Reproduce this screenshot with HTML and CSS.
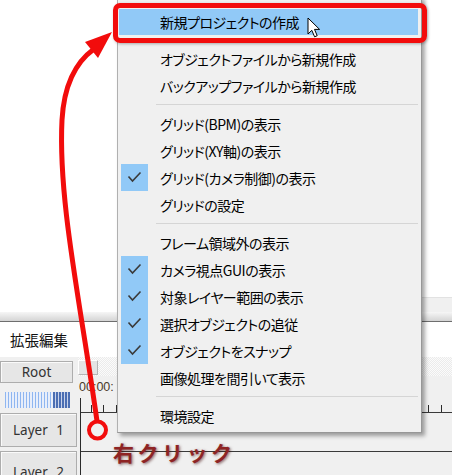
FILE: index.html
```html
<!DOCTYPE html>
<html lang="ja">
<head>
<meta charset="utf-8">
<link rel="stylesheet" href="styles.css">
</head>
<body>
<div class="screen">
  <div class="top">
    <div class="main-pane"></div>
    <div class="side-pane"><div class="side-foot"></div></div>
  </div>
  <div class="band"></div>
  <div class="title">拡張編集</div>
  <div class="timeline">
    <div class="left-col">
      <div class="btn root">Root</div>
      <div class="meter"></div>
      <div class="btn layer">Layer 1</div>
      <div class="btn layer second">Layer 2</div>
    </div>
    <div class="right-col">
      <div class="toprow"><span class="mini-btn"></span></div>
      <div class="time">00:00:</div>
      <div class="tracks">
        <div class="ruler"></div>
        <div class="track"></div>
        <div class="track"></div>
      </div>
    </div>
  </div>

  <div class="menu">
    <div class="item hl first"><span class="check"></span><span class="label">新規プロジェクトの作成</span></div>
    <div class="item"><span class="check"></span><span class="label">オブジェクトファイルから新規作成</span></div>
    <div class="item"><span class="check"></span><span class="label">バックアップファイルから新規作成</span></div>
    <div class="sep"></div>
    <div class="item"><span class="check"></span><span class="label">グリッド(BPM)の表示</span></div>
    <div class="item"><span class="check"></span><span class="label">グリッド(XY軸)の表示</span></div>
    <div class="item"><span class="check on"><svg viewBox="0 0 27 27" width="27" height="27"><polyline points="7.5,12.5 11.5,17 19.5,8.5" fill="none" stroke="#3a3a3a" stroke-width="1.6"/></svg></span><span class="label">グリッド(カメラ制御)の表示</span></div>
    <div class="item"><span class="check"></span><span class="label">グリッドの設定</span></div>
    <div class="sep"></div>
    <div class="item"><span class="check"></span><span class="label">フレーム領域外の表示</span></div>
    <div class="item"><span class="check on"><svg viewBox="0 0 27 27" width="27" height="27"><polyline points="7.5,12.5 11.5,17 19.5,8.5" fill="none" stroke="#3a3a3a" stroke-width="1.6"/></svg></span><span class="label">カメラ視点GUIの表示</span></div>
    <div class="item"><span class="check on"><svg viewBox="0 0 27 27" width="27" height="27"><polyline points="7.5,12.5 11.5,17 19.5,8.5" fill="none" stroke="#3a3a3a" stroke-width="1.6"/></svg></span><span class="label">対象レイヤー範囲の表示</span></div>
    <div class="item"><span class="check on"><svg viewBox="0 0 27 27" width="27" height="27"><polyline points="7.5,12.5 11.5,17 19.5,8.5" fill="none" stroke="#3a3a3a" stroke-width="1.6"/></svg></span><span class="label">選択オブジェクトの追従</span></div>
    <div class="item"><span class="check on"><svg viewBox="0 0 27 27" width="27" height="27"><polyline points="7.5,12.5 11.5,17 19.5,8.5" fill="none" stroke="#3a3a3a" stroke-width="1.6"/></svg></span><span class="label">オブジェクトをスナップ</span></div>
    <div class="item"><span class="check"></span><span class="label">画像処理を間引いて表示</span></div>
    <div class="sep"></div>
    <div class="item"><span class="check"></span><span class="label">環境設定</span></div>
  </div>

  <div class="red-rect"></div>
  <svg class="overlay" width="452" height="475" viewBox="0 0 452 475">
    <path d="M97,421 C80,300 58,200 62,120 C64,85 76,62 94,49" fill="none" stroke="#f20c0c" stroke-width="5"/>
    <polygon points="112,32 85,42 98,58" fill="#f20c0c"/>
    <circle cx="97.5" cy="430" r="8.5" fill="none" stroke="#f20c0c" stroke-width="4"/>
  </svg>
  <svg class="cursor" width="16" height="22" viewBox="0 0 16 22">
    <path d="M1,1 L1,17 L4.8,13.3 L7.6,19.8 L10.2,18.7 L7.5,12.4 L12.6,12.4 Z" fill="#fff" stroke="#000" stroke-width="1" stroke-linejoin="round"/>
  </svg>
  <div class="callout">右クリック</div>
</div>
</body>
</html>
```

FILE: styles.css
```css
html, body {
  margin: 0;
  padding: 0;
}
body {
  width: 452px;
  height: 475px;
  overflow: hidden;
  background: #fff;
  font-family: "Noto Sans CJK JP", "Noto Sans", sans-serif;
}
.screen {
  position: relative;
  width: 452px;
  height: 475px;
  display: flex;
  flex-direction: column;
}
.top {
  height: 312px;
  display: flex;
}
.main-pane {
  flex: 1;
  background: #fff;
}
.side-pane {
  width: 160px;
  display: flex;
  flex-direction: column;
  justify-content: flex-end;
  background: #fff;
}
.side-foot {
  height: 14px;
  border-top: 1px solid #e2e2e2;
  background: #f0f0f0;
}
.band {
  height: 9px;
  background: linear-gradient(#f6f6f6, #d4d4d4);
  border-bottom: 1px solid #6e6e6e;
}
.title {
  height: 35px;
  line-height: 35px;
  padding-left: 10px;
  font-size: 14.5px;
  color: #111;
  background: #fff;
}
.timeline {
  flex: 1;
  display: grid;
  grid-template-columns: 78px 1fr;
  background: #f0f0f0;
  min-height: 0;
}
.left-col {
  display: flex;
  flex-direction: column;
  min-height: 0;
}
.btn {
  box-sizing: border-box;
  flex: none;
  background: #e6e6e6;
  border: 1px solid #adadad;
  box-shadow: inset 1px 1px 0 #fafafa;
  color: #333;
  font-family: "Noto Sans", "Liberation Sans", sans-serif;
  font-size: 13.5px;
  display: flex;
  align-items: center;
  justify-content: center;
}
.root {
  margin-top: 4px;
  width: 73px;
  height: 22px;
}
.meter {
  flex: none;
  margin: 9px 0 0 5px;
  width: 65px;
  height: 16px;
  background:
    repeating-linear-gradient(90deg, #8fb6f0 0 1.5px, #e8eefa 1.5px 3px) 0 0 / 48px 100% no-repeat,
    repeating-linear-gradient(90deg, #4b6eb3 0 1.5px, #c9d3ea 1.5px 3px) 48px 0 / 17px 100% no-repeat;
}
.layer {
  width: 77px;
  height: 34px;
  margin-top: 5px;
  word-spacing: 5px;
}
.layer.second {
  margin-top: 4px;
  height: 42px;
}
.right-col {
  display: flex;
  flex-direction: column;
  min-height: 0;
}
.toprow {
  height: 19px;
  flex: none;
  background: repeating-conic-gradient(#fbfbfb 0 25%, #ebebeb 0 50%) 0 0 / 2px 2px;
}
.mini-btn {
  display: block;
  margin-top: 3px;
  width: 20px;
  height: 15px;
  box-sizing: border-box;
  background: #e4e4e4;
  border: 1px solid #b4b4b4;
  border-top-color: #fff;
  border-left-color: #fff;
}
.time {
  height: 22px;
  flex: none;
  line-height: 22px;
  padding-left: 1px;
  font-family: "Liberation Sans", sans-serif;
  font-size: 12.5px;
  color: #4a3a2a;
}
.tracks {
  flex: 1;
  margin-left: 2px;
  border-left: 1px solid #2a2a2a;
  display: flex;
  flex-direction: column;
}
.ruler {
  height: 14px;
  flex: none;
  border-bottom: 1.5px solid #3a3a3a;
  background: repeating-linear-gradient(90deg, transparent 0 9.5px, #2a2a2a 9.5px 10.7px, transparent 10.7px 12.5px) 0 100% / 100% 7px no-repeat;
}
.track {
  height: 38px;
  flex: none;
  border-bottom: 1px solid #3a3a3a;
}

/* context menu */
.menu {
  position: absolute;
  left: 117px;
  top: -4px;
  width: 305px;
  box-sizing: border-box;
  padding: 12px 0 3px;
  background: #f0f0f0;
  border: 1px solid #b0b0b0;
  border-right-color: #979797;
  border-bottom-color: #979797;
  box-shadow: 3px 3px 4px rgba(0, 0, 0, 0.35);
  font-family: "Noto Sans CJK JP", sans-serif;
  font-feature-settings: "palt";
  font-size: 14px;
  color: #000;
}
.item {
  height: 27px;
  margin: 0 3px 0 1px;
  display: flex;
  align-items: center;
}
.item.first {
  height: 26px;
  margin-bottom: 10px;
}
.item.hl {
  background: #91c9f7;
}
.check {
  width: 27px;
  height: 27px;
  margin-left: 2px;
  flex: none;
}
.item.first .check {
  height: 26px;
}
.check.on {
  background: #91c9f7;
}
.check svg {
  display: block;
}
.label {
  margin-left: 12px;
  white-space: nowrap;
  letter-spacing: -0.5px;
}
.sep {
  height: 11px;
  display: flex;
  align-items: center;
  padding: 0 3px 0 38px;
}
.sep::after {
  content: "";
  flex: 1;
  height: 1px;
  background: #d5d5d5;
}

/* annotations */
.red-rect {
  position: absolute;
  left: 113px;
  top: 3px;
  width: 314px;
  height: 40px;
  box-sizing: border-box;
  border: 5px solid #f20c0c;
  border-radius: 7px;
  box-shadow: 1px 1px 3px rgba(0, 0, 0, 0.3);
}
.overlay {
  position: absolute;
  left: 0;
  top: 0;
  pointer-events: none;
}
.cursor {
  position: absolute;
  left: 307px;
  top: 17px;
}
.callout {
  position: absolute;
  left: 113px;
  top: 437px;
  font-family: "Noto Sans CJK JP", sans-serif;
  font-weight: 700;
  font-size: 21px;
  letter-spacing: 3.5px;
  color: #8e2424;
  text-shadow: 1px 1px 3px rgba(60, 0, 0, 0.6);
}
```
